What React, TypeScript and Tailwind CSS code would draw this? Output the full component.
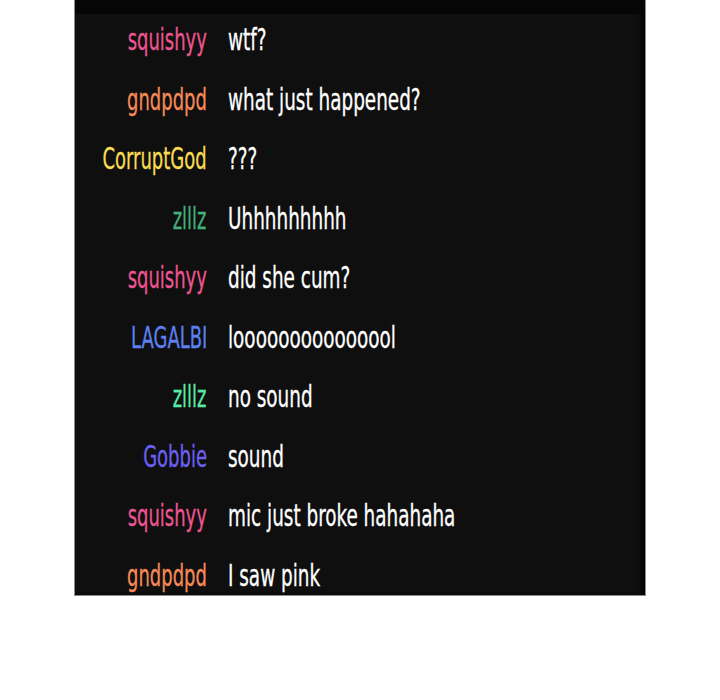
import React from 'react';

interface ChatLine {
  user: string;
  color: string;
  text: string;
}

const lines: ChatLine[] = [
  { user: 'squishyy', color: 'text-[#ec5590]', text: 'wtf?' },
  { user: 'gndpdpd', color: 'text-[#f58a58]', text: 'what just happened?' },
  { user: 'CorruptGod', color: 'text-[#f8dc52]', text: '???' },
  { user: 'zlllz', color: 'text-[#43b07c]', text: 'Uhhhhhhhhh' },
  { user: 'squishyy', color: 'text-[#ec5590]', text: 'did she cum?' },
  { user: 'LAGALBI', color: 'text-[#5b80f2]', text: 'looooooooooooool' },
  { user: 'zlllz', color: 'text-[#58eaa8]', text: 'no sound' },
  { user: 'Gobbie', color: 'text-[#6c60f2]', text: 'sound' },
  { user: 'squishyy', color: 'text-[#ec5590]', text: 'mic just broke hahahaha' },
  { user: 'gndpdpd', color: 'text-[#f58a58]', text: 'I saw pink' },
];

// the reference uses a tall condensed face; DejaVu Sans Condensed squeezed a bit more
const font = { fontFamily: '"DejaVu Sans Condensed", "DejaVu Sans", sans-serif', fontStretch: 'condensed' };

const App: React.FC = () => {
  return (
    <div className="w-[720px] h-[700px] bg-white">
      <div className="ml-[74px] w-[572px] h-[596px] bg-[#0f0f0f] border-x border-b border-[#8c8c8c] flex flex-col overflow-hidden shadow-[inset_-4px_0_4px_rgba(0,0,0,0.8)]">
        <div className="h-[14px] shrink-0 bg-[#060606]" />
        <div className="-mt-[4px] flex flex-col text-[31px] leading-none" style={font}>
          {lines.map((l, i) => (
            <div key={i} className="h-[59.5px] shrink-0 flex items-center">
              <div className="w-[132px] shrink-0 flex justify-end">
                <span className={`inline-block whitespace-nowrap origin-right scale-x-[0.645] [-webkit-text-stroke:0.3px_currentColor] ${l.color}`}>
                  {l.user}
                </span>
              </div>
              <span className="ml-[21px] inline-block whitespace-nowrap origin-left scale-x-[0.66] text-white [-webkit-text-stroke:0.3px_currentColor]">
                {l.text}
              </span>
            </div>
          ))}
        </div>
      </div>
    </div>
  );
};

export default App;
